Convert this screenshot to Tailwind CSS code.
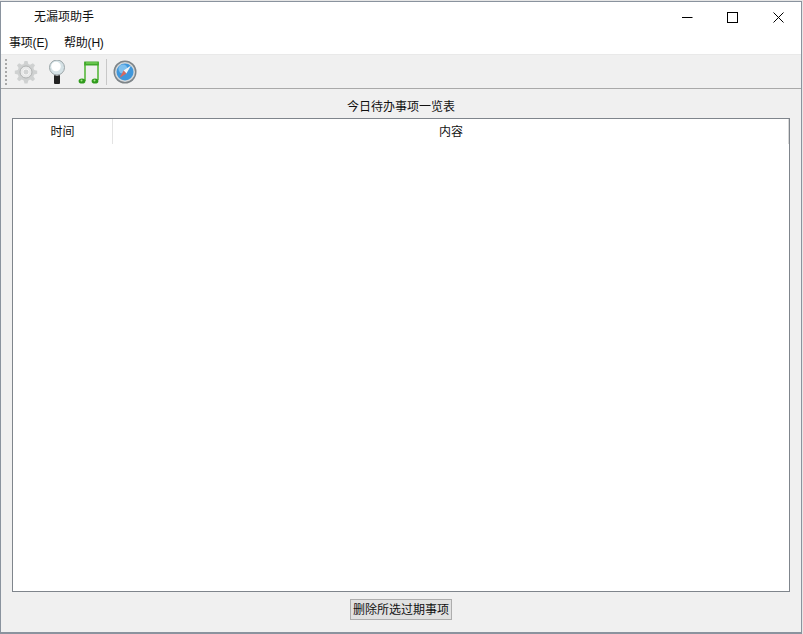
<!DOCTYPE html>
<html lang="zh">
<head>
  <meta charset="UTF-8" />
  <title>无漏项助手</title>
  <script src="https://cdn.jsdelivr.net/npm/@tailwindcss/browser@4"></script>
</head>
<body class="bg-[#e6e6e6] h-[634px] w-[803px] overflow-hidden font-['Liberation_Sans','Noto_Sans_CJK_SC',sans-serif] text-[12px] text-[#111]">
  <div class="mt-px w-[802px] h-[633px] border border-b-2 border-[#8a939e] flex flex-col bg-[#f0f0f0]">
    <!-- 标题栏 -->
    <div class="h-[30px] bg-white flex items-center shrink-0">
      <span class="ml-[33px] flex-1">无漏项助手</span>
      <div class="flex items-center">
        <div class="w-[46px] h-[30px] flex items-center justify-center pl-[2px]">
          <svg width="11" height="11" viewBox="0 0 11 11"><path d="M0 5.5H10.5" stroke="#000" fill="none" /></svg>
        </div>
        <div class="w-[46px] h-[30px] flex items-center justify-center">
          <svg width="11" height="11" viewBox="0 0 11 11"><rect x="0.5" y="0.5" width="10" height="10" stroke="#000" fill="none" /></svg>
        </div>
        <div class="w-[46px] h-[30px] flex items-center justify-center pl-[1px]">
          <svg width="11" height="11" viewBox="0 0 11 11"><path d="M0.5 0.5L10.5 10.5M10.5 0.5L0.5 10.5" stroke="#000" fill="none" /></svg>
        </div>
      </div>
    </div>
    <!-- 菜单 -->
    <div class="h-[23px] bg-white flex items-center gap-[16px] pl-[8px] border-b border-[#e9e9e9] shrink-0 tracking-[-0.2px]">
      <span>事项(E)</span>
      <span>帮助(H)</span>
    </div>
    <!-- 工具栏 -->
    <div class="h-[34px] flex items-center border-b border-[#a9a9a9] shrink-0 pl-[4px]">
      <div class="w-[2px] h-[26px] border-l-2 border-dotted border-[#a8a8a8] mr-[7px]"></div>
      <svg width="24" height="24" viewBox="0 0 24 24" class="mr-[7px] blur-[0.5px]">
        <path d="M10.5 1h3l.8 3 1.9.8 2.7-1.6 2.1 2.1-1.6 2.7.8 1.9 3 .8v3l-3 .8-.8 1.9 1.6 2.7-2.1 2.1-2.7-1.6-1.9.8-.8 3h-3l-.8-3-1.9-.8-2.7 1.6-2.1-2.1 1.6-2.7-.8-1.9-3-.8v-3l3-.8.8-1.9-1.6-2.7 2.1-2.1 2.7 1.6 1.9-.8z" fill="#cfd1d1" />
        <circle cx="12" cy="12" r="6" fill="#e8e9e9" stroke="#b0b2b2" />
        <circle cx="12" cy="12" r="3" fill="#d2d4d4" stroke="#f4f4f4" />
      </svg>
      <svg width="24" height="24" viewBox="0 0 24 24" class="mr-[7px] blur-[0.3px]">
        <rect x="9" y="15" width="6" height="9" rx="1" fill="#222" />
        <rect x="10.5" y="13" width="3" height="3" fill="#9a9a9a" />
        <circle cx="12" cy="7.5" r="7.5" fill="#d5e2e6" stroke="#9aa4a7" />
        <circle cx="11" cy="6.5" r="4.8" fill="#fff" />
      </svg>
      <svg width="24" height="24" viewBox="0 0 24 24" class="mr-[6px] blur-[0.3px]">
        <path d="M9 21V3H22V20" stroke="#58b83c" stroke-width="1.6" fill="none" />
        <path d="M8.2 1.5H22.8V5.5H8.2z" fill="#3fa82a" />
        <path d="M10 2.5H21.5V3.5H10z" fill="#8fe06f" />
        <ellipse cx="6" cy="21" rx="3.4" ry="2.6" fill="#2f9a1c" />
        <ellipse cx="19" cy="21" rx="3.4" ry="2.6" fill="#2f9a1c" />
        <circle cx="5.5" cy="20.5" r="1" fill="#a5ec8a" />
        <circle cx="18.5" cy="20.5" r="1" fill="#a5ec8a" />
      </svg>
      <div class="w-px h-[26px] bg-[#c8c8c8] mr-[6px]"></div>
      <svg width="24" height="24" viewBox="0 0 24 24" class="blur-[0.3px]">
        <circle cx="12" cy="12" r="11.5" fill="#7d8488" />
        <circle cx="12" cy="12" r="10" fill="#d5d9db" />
        <circle cx="12" cy="12" r="8.5" fill="#3f97dc" />
        <circle cx="10" cy="9" r="4.5" fill="#7fc0ee" />
        <path d="M18 5.5L13.4 13.4 10.6 10.6z" fill="#f2f5f7" />
        <path d="M6.5 18L10.6 10.6 13.4 13.4z" fill="#d8695f" />
      </svg>
    </div>
    <!-- 内容 -->
    <div class="flex-1 flex flex-col px-[11px] min-h-0">
      <div class="h-[29px] flex items-center justify-center shrink-0 pt-[6px]">今日待办事项一览表</div>
      <div class="h-[474px] border border-[#7f858c] bg-white shrink-0">
        <div class="h-[25px] flex items-center text-center">
          <div class="w-[100px] h-full flex items-center justify-center border-r border-[#e3e3e3]">时间</div>
          <div class="flex-1 h-full flex items-center justify-center border-r border-[#d8d8d8] pl-[1px]">内容</div>
        </div>
      </div>
      <div class="flex justify-center pt-[7px]">
        <button class="w-[102px] h-[21px] bg-[#e1e1e1] border border-[#adadad] text-[12px] leading-none">删除所选过期事项</button>
      </div>
    </div>
  </div>
</body>
</html>
